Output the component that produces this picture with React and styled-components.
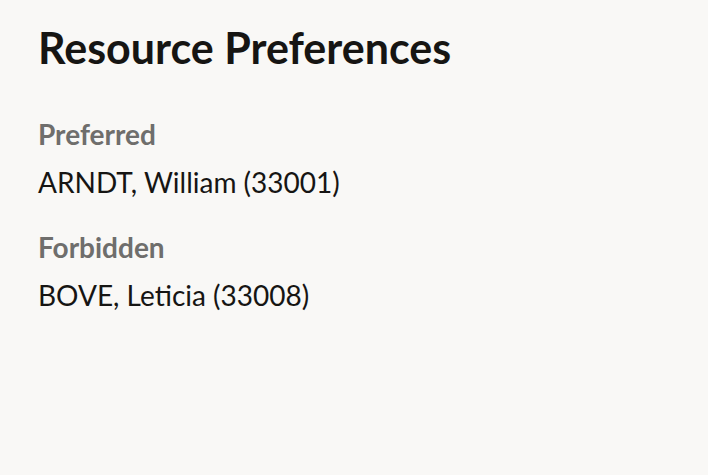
import React from "react";
import styled, { createGlobalStyle } from "styled-components";

const GlobalStyle = createGlobalStyle`
  html, body {
    margin: 0;
    padding: 0;
    background: #f9f8f6;
  }
  body {
    font-family: Lato, "Noto Sans", sans-serif;
    color: #161513;
  }
`;

const Page = styled.div`
  width: 708px;
  height: 475px;
  box-sizing: border-box;
  padding: 22px 38px 0;
  background: #f9f8f6;
`;

const Title = styled.h1`
  margin: 0 0 44px;
  font-size: 43px;
  font-weight: 700;
  line-height: 52px;
  color: #161513;
`;

const Group = styled.div`
  display: flex;
  flex-direction: column;
  gap: 16px;
  margin-bottom: 33px;
`;

const Label = styled.div`
  font-size: 28px;
  font-weight: 700;
  line-height: 32px;
  color: #6f6e6c;
`;

const Value = styled.div`
  font-size: 28px;
  font-weight: 400;
  line-height: 32px;
  color: #161513;
`;

const prefs = [
  { label: "Preferred", value: "ARNDT, William (33001)" },
  { label: "Forbidden", value: "BOVE, Leticia (33008)" },
];

export default function App() {
  return (
    <>
      <GlobalStyle />
      <Page>
        <Title>Resource Preferences</Title>
        {prefs.map(p => (
          <Group key={p.label}>
            <Label>{p.label}</Label>
            <Value>{p.value}</Value>
          </Group>
        ))}
      </Page>
    </>
  );
}
